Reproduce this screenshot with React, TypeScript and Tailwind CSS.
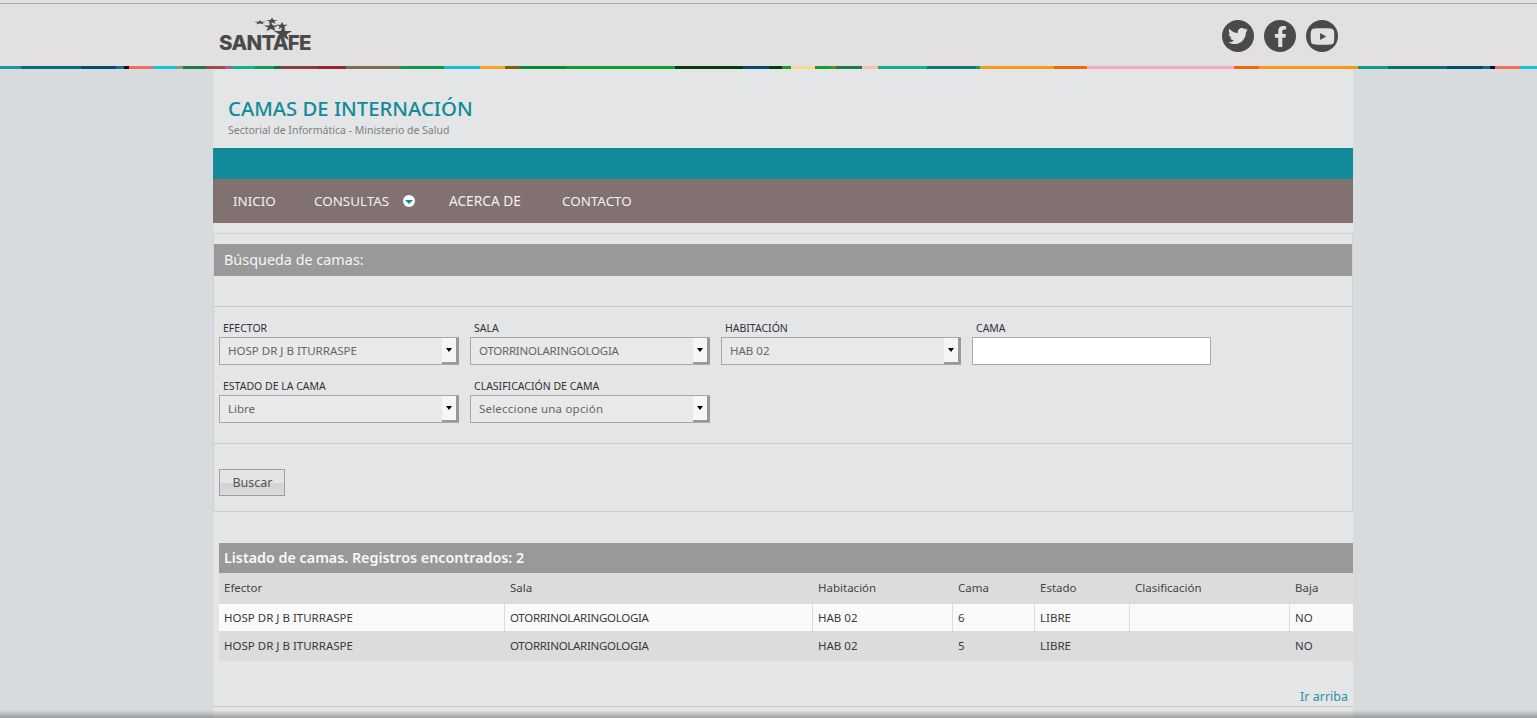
import { FaTwitter, FaFacebookF, FaYoutube } from "react-icons/fa";

const stripe: [number, string][] = [
  [21, "#1a9a9a"], [81, "#0d6e75"], [116, "#0a4a70"], [124, "#16708a"], [129, "#111111"], [153, "#f0705f"],
  [176, "#17c5d0"], [183, "#7aa080"], [206, "#1f7a4a"], [225, "#a04a50"], [232, "#a0609a"], [255, "#0fb58a"],
  [274, "#0f9a60"], [281, "#0f6a50"], [317, "#8a4040"], [346, "#902a30"], [401, "#7a7050"], [444, "#0f9850"],
  [480, "#17c0d0"], [505, "#f7a520"], [520, "#7a6010"], [566, "#0a8a30"], [675, "#109a30"], [743, "#063a10"],
  [769, "#0a4a70"], [782, "#063a10"], [791, "#1a9a30"], [815, "#fad890"], [831, "#1a9a30"],
  [836, "#6a8a20"], [862, "#1a7a50"], [878, "#fcc0a8"], [927, "#10b090"], [976, "#0f7a70"], [980, "#109a80"],
  [1054, "#f79a18"], [1087, "#ea6a10"], [1234, "#f8a8c0"], [1259, "#ea6a10"], [1358, "#f79a18"], [1388, "#109a90"],
  [1447, "#0d6e70"], [1483, "#0a4a70"], [1490, "#16708a"], [1495, "#111111"], [1520, "#f0705f"], [1537, "#17c5d0"],
];

function Stripe() {
  let prev = 0;
  return (
    <div className="flex h-[3px] w-full">
      {stripe.map(([end, color], i) => {
        const w = end - prev;
        prev = end;
        return <div key={i} style={{ width: w, backgroundColor: color }} />;
      })}
    </div>
  );
}

function Logo() {
  const star = "M0 -5 L1.3 -1.6 L5 -1.6 L2 .6 L3.1 4 L0 2 L-3.1 4 L-2 .6 L-5 -1.6 L-1.3 -1.6 Z";
  return (
    <div className="relative h-[36px] w-[96px]">
      <svg className="absolute left-[31px] top-[-2px]" width="46" height="26" viewBox="0 0 46 26" fill="#4a4a4a">
        <path d={star} transform="translate(10 7.5) scale(1.2 .45)" />
        <path d={star} transform="translate(22 6) scale(1.15 .7)" />
        <path d={star} transform="translate(21 12) scale(1.5 1)" />
        <path d={star} transform="translate(32 11) scale(1.15 .8)" />
        <path d={star} transform="translate(33 18.5) scale(1.8 1.6)" />
      </svg>
      <span className="absolute left-0 top-[14px] whitespace-nowrap font-['Inter'] text-[20.5px] leading-[24px] font-extrabold tracking-[-0.7px] [word-spacing:-4px] text-[#4a4a4a]">
        SANTA FE
      </span>
    </div>
  );
}

function Social({ children }: { children: React.ReactNode }) {
  return <div className="flex h-8 w-8 items-center justify-center rounded-full bg-[#4a4a4a] text-[#e2e0e1]">{children}</div>;
}

function Select({ label, value, valueClass = "" }: { label: string; value: string; valueClass?: string }) {
  return (
    <div className="w-[240px]">
      <div className="h-[15px] pt-[1px] pl-[4px] text-[10.5px] leading-[15px] text-[#333]">{label}</div>
      <div className="mt-[2px] flex h-[28px] items-center justify-between border border-[#a9a9a9] bg-[#e9e9e9] pl-[8px] text-[11.5px] text-[#666]">
        <span className={valueClass}>{value}</span>
        <div className="-mr-px flex h-full w-[17px] items-center justify-center border-r-[3px] border-b-2 border-r-[#999] border-b-[#999] bg-[#f6f6f6]">
          <div className="h-0 w-0 border-x-[3px] border-t-[4px] border-x-transparent border-t-black" />
        </div>
      </div>
    </div>
  );
}

const cols = ["w-[286px]", "w-[308px]", "w-[140px]", "w-[82px]", "w-[95px]", "w-[160px]", "w-[63px]"];
const heads = ["Efector", "Sala", "Habitación", "Cama", "Estado", "Clasificación", "Baja"];
const rows = [
  ["HOSP DR J B ITURRASPE", "OTORRINOLARINGOLOGIA", "HAB 02", "6", "LIBRE", "", "NO"],
  ["HOSP DR J B ITURRASPE", "OTORRINOLARINGOLOGIA", "HAB 02", "5", "LIBRE", "", "NO"],
];

export default function App() {
  return (
    <div className="relative flex h-[718px] flex-col overflow-hidden bg-[#d7dbde] font-['Noto_Sans',sans-serif]">
      <header className="h-[66px] border-t-[1px] border-t-[#e2e0e1] bg-[#e2e0e1]">
        <div className="mt-[2px] h-px bg-[#a8a8a8]" />
        <div className="ml-[213px] flex w-[1140px] items-start justify-between pt-[13px] pl-[6px] pr-[15px]">
          <Logo />
          <div className="flex gap-[10px] pt-[3px]">
            <Social><FaTwitter size={20} /></Social>
            <Social><FaFacebookF size={21} /></Social>
            <Social><FaYoutube size={25} /></Social>
          </div>
        </div>
      </header>
      <Stripe />
      <main className="ml-[213px] w-[1140px] flex-1 bg-[#e3e5e7]">
        <div className="h-[79px] pt-[25px] pl-[15px]">
          <h1 className="text-[20.3px] leading-[28px] font-medium text-[#118a99]">CAMAS DE INTERNACIÓN</h1>
          <p className="mt-px text-[10.5px] leading-[14px] text-[#808080]">Sectorial de Informática - Ministerio de Salud</p>
        </div>
        <div className="h-[31px] bg-[#118a99]" />
        <nav className="flex h-[44px] items-center bg-[#817271] pl-[20px] text-[13.4px] text-[#f2f0f0]">
          <span className="w-[81px]">INICIO</span>
          <span className="w-[89px]">CONSULTAS</span>
          <span className="flex h-[12px] w-[12px] items-center justify-center rounded-full bg-white">
            <span className="mt-[2px] h-0 w-0 border-x-[4px] border-t-[4px] border-x-transparent border-t-[#118a99]" />
          </span>
          <span className="ml-[34px] w-[113px] text-[13.7px]">ACERCA DE</span>
          <span>CONTACTO</span>
        </nav>

        <section className="mt-[10px] h-[279px] border border-[#d0d1d3]">
          <div className="mt-[10px] h-[32px] bg-[#999999] pl-[10px] text-[14.4px] leading-[32px] text-[#f5f5f5]">Búsqueda de camas:</div>
          <div className="mt-[30px] h-[138px] border-t border-b border-[#c8c9cb] px-[5px] pt-[13px]">
            <div className="flex gap-[11px]">
              <Select label="EFECTOR" value="HOSP DR J B ITURRASPE" />
              <Select label="SALA" value="OTORRINOLARINGOLOGIA" valueClass="tracking-[-0.25px]" />
              <Select label="HABITACIÓN" value="HAB 02" />
              <div className="w-[239px]">
                <div className="h-[15px] pt-[1px] pl-[4px] text-[10.5px] leading-[15px] text-[#333]">CAMA</div>
                <div className="mt-[2px] h-[28px] border border-[#a9a9a9] bg-white" />
              </div>
            </div>
            <div className="mt-[13px] flex gap-[11px]">
              <Select label="ESTADO DE LA CAMA" value="Libre" />
              <Select label="CLASIFICACIÓN DE CAMA" value="Seleccione una opción" valueClass="tracking-[0.2px]" />
            </div>
          </div>
          <button className="mt-[25px] ml-[5px] h-[27px] w-[66px] border border-[#a0a0a0] bg-[linear-gradient(#e4e4e4_0%,#e4e4e4_50%,#d2d2d2_55%,#dcdcdc_100%)] pt-px pl-px text-[12.5px] text-[#555]">
            Buscar
          </button>
        </section>

        <div className="mt-[31px] ml-[6px]">
          <div className="h-[30px] bg-[#999999] pl-[5px] text-[14.3px] leading-[30px] font-semibold text-[#f8f8f8]">
            Listado de camas. Registros encontrados: 2
          </div>
          <table className="w-[1134px] table-fixed border-separate border-spacing-0 text-[11.5px] text-[#444]">
            <thead>
              <tr className="h-[31px] bg-[#dcdcdc]">
                {heads.map((h, i) => (
                  <th key={h} className={`${cols[i]} pb-px pl-[5px] text-left font-normal`}>{h}</th>
                ))}
              </tr>
            </thead>
            <tbody>
              <tr className="h-[27px] bg-[#fafafa] text-[#3a3a3a]">
                {rows[0].map((c, i) => (
                  <td key={i} className={`pl-[5px] ${i < 6 ? "border-r border-[#dcdcdc]" : ""} ${i === 1 ? "tracking-[-0.3px]" : ""}`}>{c}</td>
                ))}
              </tr>
              <tr className="h-[30px] bg-[#dcdcdc] text-[#3a3a3a]">
                {rows[1].map((c, i) => (
                  <td key={i} className={`pl-[5px] ${i === 1 ? "tracking-[-0.3px]" : ""}`}>{c}</td>
                ))}
              </tr>
            </tbody>
          </table>
        </div>
        <div className="mt-[28px] pr-[5px] text-right text-[12.5px] leading-[16px] text-[#2a93a0]">Ir arriba</div>
        <div className="mt-[1px] border-t border-[#c8c9cb]" />
      </main>
      <div className="absolute inset-x-0 bottom-0 h-[8px] bg-[linear-gradient(transparent,rgba(110,110,110,0.6))]" />
    </div>
  );
}
